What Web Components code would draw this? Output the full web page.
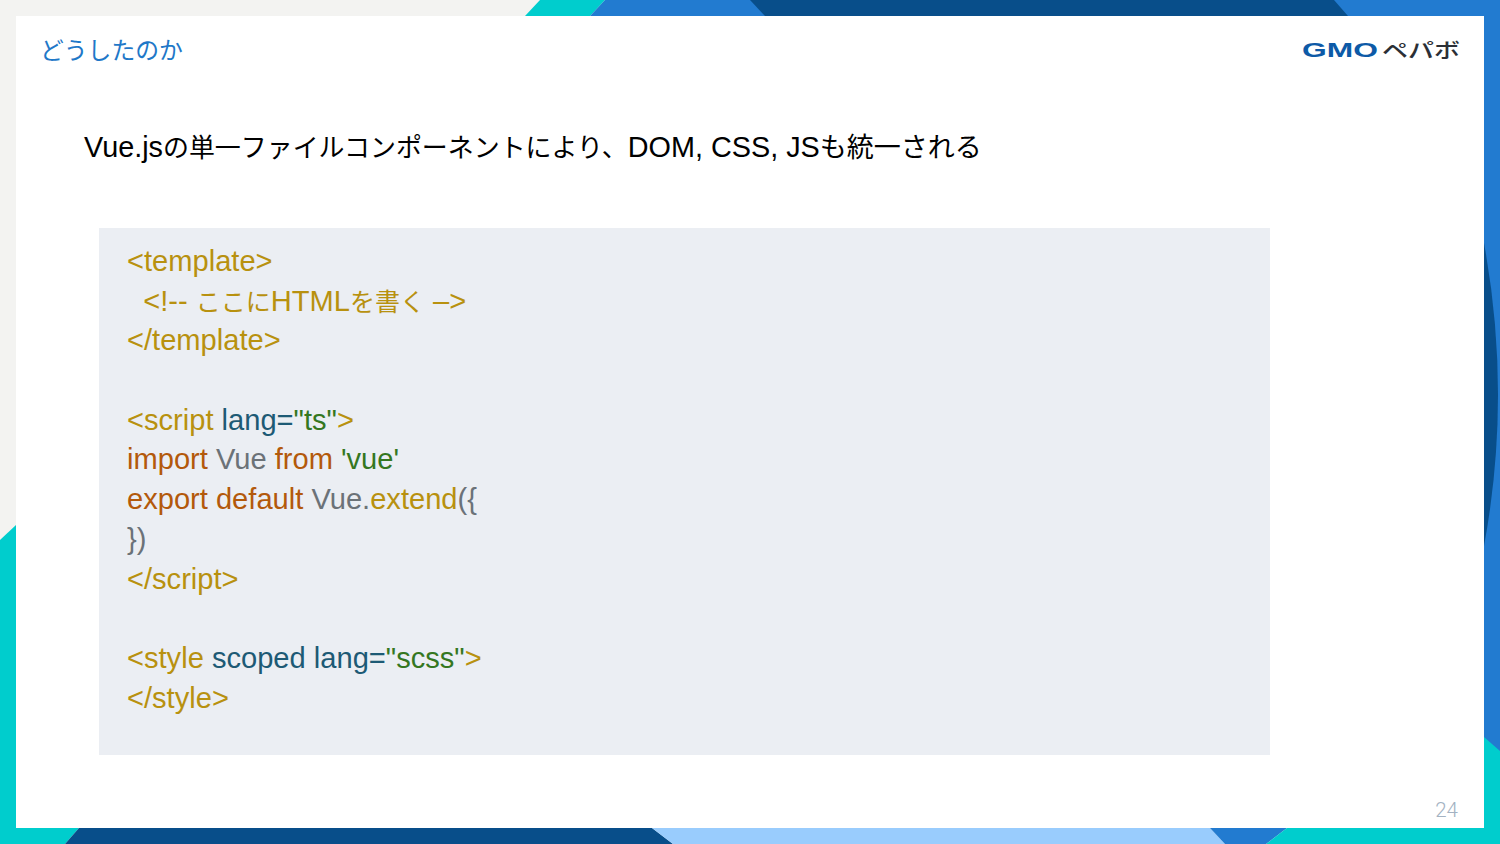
<!DOCTYPE html>
<html lang="ja">
<head>
<meta charset="utf-8">
<title>どうしたのか</title>
<style>
  html, body { margin: 0; padding: 0; background: #f3f3f1; }
</style>
</head>
<body>

<slide-frame>
  <slide-header slot="header">
    <span slot="title">どうしたのか</span>
  </slide-header>
  <slide-lead>Vue.js<cjk-run style="font-size:25.95px">の単一ファイルコンポーネントにより、</cjk-run>DOM, CSS, JS<cjk-run style="font-size:27px">も統一される</cjk-run></slide-lead>
  <code-block>
    <code-line><code-tok kind="tag">&lt;template&gt;</code-tok></code-line>
    <code-line><code-tok kind="tag">&nbsp; &lt;!-- <cjk-run style="font-size:25px">ここに</cjk-run>HTML<cjk-run style="font-size:25px">を書く</cjk-run> –&gt;</code-tok></code-line>
    <code-line><code-tok kind="tag">&lt;/template&gt;</code-tok></code-line>
    <code-line></code-line>
    <code-line><code-tok kind="tag">&lt;script</code-tok> <code-tok kind="attr">lang=</code-tok><code-tok kind="str">"ts"</code-tok><code-tok kind="tag">&gt;</code-tok></code-line>
    <code-line><code-tok kind="key">import</code-tok> <code-tok kind="plain">Vue</code-tok> <code-tok kind="key">from</code-tok> <code-tok kind="str">'vue'</code-tok></code-line>
    <code-line><code-tok kind="key">export default</code-tok> <code-tok kind="plain">Vue.</code-tok><code-tok kind="tag">extend</code-tok><code-tok kind="plain">({</code-tok></code-line>
    <code-line><code-tok kind="plain">})</code-tok></code-line>
    <code-line><code-tok kind="tag">&lt;/script&gt;</code-tok></code-line>
    <code-line></code-line>
    <code-line><code-tok kind="tag">&lt;style</code-tok> <code-tok kind="attr">scoped lang=</code-tok><code-tok kind="str">"scss"</code-tok><code-tok kind="tag">&gt;</code-tok></code-line>
    <code-line><code-tok kind="tag">&lt;/style&gt;</code-tok></code-line>
  </code-block>
  <span slot="page">24</span>
</slide-frame>

<script>
const FONT = '"Liberation Sans", "Noto Sans CJK JP", sans-serif';

// The slide: coloured backdrop shapes with the white sheet on top
class SlideFrame extends HTMLElement {
  constructor() {
    super();
    this.attachShadow({ mode: 'open' });
    this.shadowRoot.innerHTML = `
      <style>
        :host {
          display: block;
          position: relative;
          width: 1500px;
          height: 844px;
          overflow: hidden;
          box-sizing: border-box;
          padding: 16px;
          background: #f3f3f1;
          font-family: ${FONT};
        }
        svg { position: absolute; left: 0; top: 0; }
        .sheet {
          position: relative;
          height: 100%;
          background: #fff;
          display: flex;
          flex-direction: column;
        }
        .page {
          margin-top: auto;
          align-self: flex-end;
          padding: 0 26px 5px 0;
          font: 300 20.5px/26px Roboto, sans-serif;
          color: #a3b2c2;
        }
      </style>
      <svg width="1500" height="844" viewBox="0 0 1500 844" aria-hidden="true">
        <polygon points="540,0 605,0 590,16 525,16" fill="#00cdcd"/>
        <polygon points="605,0 1500,0 1500,16 590,16" fill="#227bd0"/>
        <polygon points="750,0 1334,0 1348,16 765,16" fill="#084e8a"/>
        <polygon points="1484,0 1500,0 1500,844 1484,844" fill="#227bd0"/>
        <path d="M1484 243 Q1512 395 1484 546Z" fill="#084e8a"/>
        <polygon points="1484,737 1500,751 1500,844 1484,844" fill="#00cdcd"/>
        <polygon points="0,540 16,525 16,844 0,844" fill="#00cdcd"/>
        <polygon points="0,828 79,828 65,844 0,844" fill="#00cdcd"/>
        <polygon points="79,828 652,828 673,844 65,844" fill="#084e8a"/>
        <polygon points="652,828 1210,828 1225,844 673,844" fill="#99ccfd"/>
        <polygon points="1210,828 1287,828 1266,844 1225,844" fill="#227bd0"/>
        <polygon points="1287,828 1500,828 1500,844 1266,844" fill="#00cdcd"/>
      </svg>
      <div class="sheet">
        <slot name="header"></slot>
        <slot></slot>
        <div class="page"><slot name="page"></slot></div>
      </div>`;
  }
}

// Title on the left, company logo on the right
class SlideHeader extends HTMLElement {
  constructor() {
    super();
    this.attachShadow({ mode: 'open' });
    this.shadowRoot.innerHTML = `
      <style>
        :host {
          display: flex;
          justify-content: space-between;
          align-items: center;
          height: 69px;
          padding: 0 24px 0 24px;
        }
        .title { font-size: 23.8px; line-height: 69px; color: #1f78c8; }
        .logo { display: flex; align-items: center; width: 158px; height: 24px; margin-top: -1px; }
        .gmo, .kana { display: block; transform-origin: left center; white-space: nowrap; }
        .gmo {
          width: 80px;
          font: 700 19.5px/24px "Liberation Sans", sans-serif;
          color: #0d5aa7;
          transform: scaleX(1.63);
        }
        .kana {
          font: 500 20px/24px "Noto Sans CJK JP", sans-serif;
          color: #2b2f36;
          transform: scaleX(1.3);
        }
      </style>
      <div class="title"><slot name="title"></slot></div>
      <div class="logo"><span class="gmo">GMO</span><span class="kana">ペパボ</span></div>`;
  }
}

class SlideLead extends HTMLElement {
  constructor() {
    super();
    this.attachShadow({ mode: 'open' });
    this.shadowRoot.innerHTML = `<style>
        :host {
          display: block;
          margin: 40px 0 0 68px;
          font-size: 28.8px;
          line-height: 44px;
          color: #000;
          white-space: nowrap;
        }
      </style><slot></slot>`;
  }
}

class CodeBlock extends HTMLElement {
  constructor() {
    super();
    this.attachShadow({ mode: 'open' });
    this.shadowRoot.innerHTML = `<style>
        :host {
          display: block;
          box-sizing: border-box;
          width: 1171px;
          height: 527px;
          margin: 59px 0 0 83px;
          padding: 14px 0 0 28px;
          background: #ebeef3;
          font-size: 29.1px;
        }
      </style><slot></slot>`;
  }
}

class CodeLine extends HTMLElement {
  constructor() {
    super();
    this.attachShadow({ mode: 'open' });
    this.shadowRoot.innerHTML = `<style>
        :host { display: block; height: 39.7px; line-height: 39.7px; white-space: nowrap; }
      </style><slot></slot>`;
  }
}

// One coloured run of code; the kind attribute picks the colour.
// No whitespace around the slot: on an inline host it would show as a space.
class CodeTok extends HTMLElement {
  constructor() {
    super();
    this.attachShadow({ mode: 'open' });
    this.shadowRoot.innerHTML = `<style>
        :host { display: inline; }
        :host([kind="tag"]) { color: #b8910f; }
        :host([kind="attr"]) { color: #1d5a75; }
        :host([kind="str"]) { color: #35771f; }
        :host([kind="key"]) { color: #b3590b; }
        :host([kind="plain"]) { color: #6b7278; }
      </style><slot></slot>`;
  }
}

// Japanese runs sit a little smaller than the Latin text around them
class CjkRun extends HTMLElement {
  constructor() {
    super();
    this.attachShadow({ mode: 'open' });
    this.shadowRoot.innerHTML = `<style>
        :host { display: inline; font-family: "Noto Sans CJK JP", sans-serif; line-height: 1; }
      </style><slot></slot>`;
  }
}

customElements.define('slide-frame', SlideFrame);
customElements.define('slide-header', SlideHeader);
customElements.define('slide-lead', SlideLead);
customElements.define('code-block', CodeBlock);
customElements.define('code-line', CodeLine);
customElements.define('code-tok', CodeTok);
customElements.define('cjk-run', CjkRun);
</script>
</body>
</html>
